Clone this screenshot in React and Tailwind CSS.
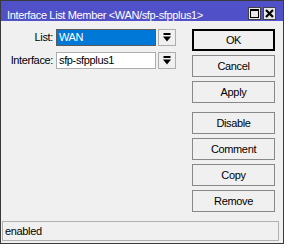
const font = { fontFamily: '"Liberation Sans", Arial, sans-serif' };

function DropArrow() {
  return (
    <svg width="8" height="9" viewBox="0 0 8 9" className="block">
      <rect x="0.5" y="0" width="7" height="2" fill="#000" />
      <path d="M0 3.5 H8 L4 8.5 Z" fill="#000" />
    </svg>
  );
}

function Field({ label, value, selected }) {
  return (
    <div className="flex items-center h-[17px]">
      <div className="w-[55px] text-right pr-[3px] text-[11px] tracking-[-0.35px] text-black">{label}</div>
      <div
        className={
          selected
            ? 'w-[100px] h-[17px] border border-[#5a5a5a] bg-[#0078d7] text-white text-[11px] tracking-[-0.35px] leading-[15px] px-[2px]'
            : 'w-[100px] h-[17px] border border-[#adadad] bg-white text-black text-[11px] tracking-[-0.35px] leading-[15px] px-[2px]'
        }
      >
        {value}
      </div>
      <div className="ml-[2px] w-[18px] h-[17px] border border-[#adadad] bg-[#f0f0f0] flex items-center justify-center">
        <DropArrow />
      </div>
    </div>
  );
}

function Btn({ children, primary }) {
  return (
    <div
      className={
        primary
          ? 'h-[22px] border-2 border-black bg-[#f0f0f0] flex items-center justify-center text-[11px] tracking-[-0.35px] text-black'
          : 'h-[22px] border border-[#888888] bg-[#f0f0f0] flex items-center justify-center text-[11px] tracking-[-0.35px] text-black'
      }
    >
      {children}
    </div>
  );
}

export default function App() {
  return (
    <div style={font} className="w-[284px] h-[244px] border border-[#3a3a3a] bg-[#f0f0f0] flex flex-col">
      <div className="h-[20px] bg-[#5050c8] flex items-start justify-between pl-[6px] pr-[7px]">
        <span className="text-white text-[11px] tracking-[-0.35px] leading-[13px] mt-[8px]">Interface List Member &lt;WAN/sfp-sfpplus1&gt;</span>
        <div className="flex gap-[2px] mt-[6px]">
          <div className="w-[13px] h-[13px] bg-[#e8e8e8] border border-[#444] flex items-center justify-center">
            <div className="w-[9px] h-[9px] border border-black border-t-2" />
          </div>
          <div className="w-[13px] h-[13px] bg-[#e8e8e8] border border-[#444] flex items-center justify-center">
            <svg width="9" height="9" viewBox="0 0 9 9" className="block">
              <path d="M1 1 L8 8 M8 1 L1 8" stroke="#000" strokeWidth="2.2" />
            </svg>
          </div>
        </div>
      </div>
      <div className="flex-1 flex">
        <div className="w-[190px] flex flex-col gap-[6px] pt-[8px]">
          <Field label="List:" value="WAN" selected />
          <Field label="Interface:" value="sfp-sfpplus1" />
        </div>
        <div className="w-[83px] ml-[1px] pt-[8px] flex flex-col">
          <div className="flex flex-col gap-[4px]">
            <Btn primary>OK</Btn>
            <Btn>Cancel</Btn>
            <Btn>Apply</Btn>
          </div>
          <div className="flex flex-col gap-[4px] mt-[9px]">
            <Btn>Disable</Btn>
            <Btn>Comment</Btn>
            <Btn>Copy</Btn>
            <Btn>Remove</Btn>
          </div>
        </div>
      </div>
      <div className="ml-[1px] mb-[2px] mr-[4px] h-[20px] border border-[#b0b0b0] px-[2px] text-[11px] tracking-[-0.35px] leading-[18px] text-black">
        enabled
      </div>
    </div>
  );
}
